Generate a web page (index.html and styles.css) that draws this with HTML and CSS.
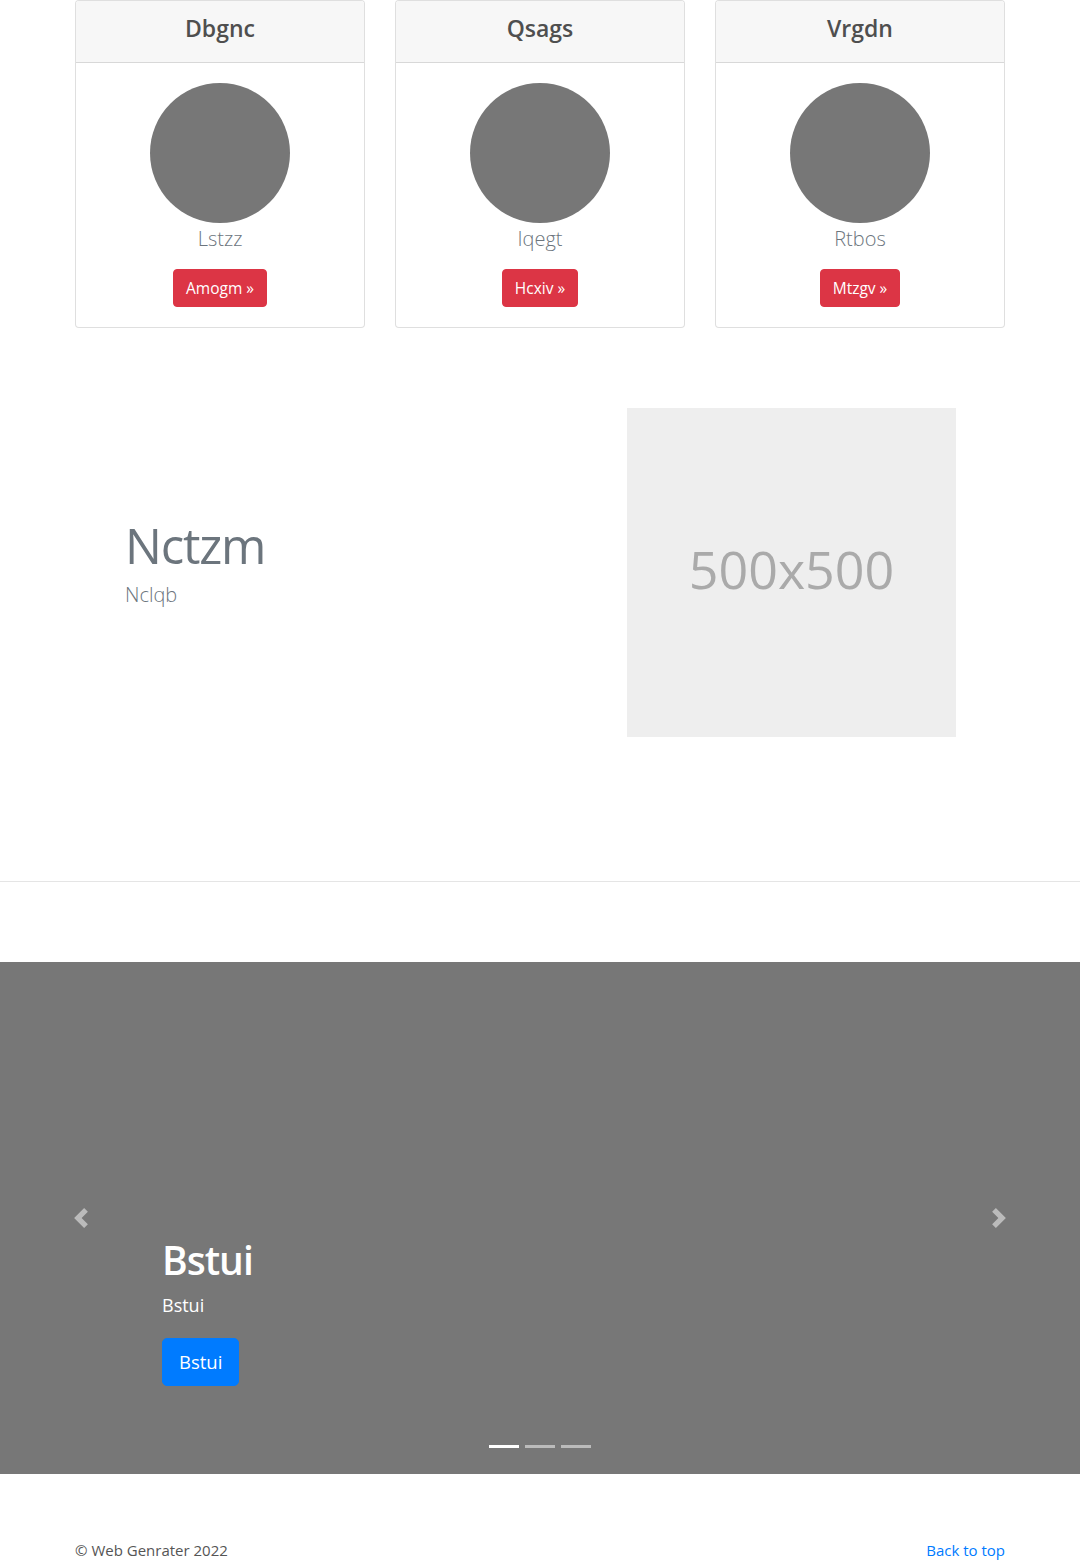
FILE: index.html
```html
<!DOCTYPE html>
<html lang="en">
<head>
<meta charset="utf-8">
<title>Web Genrater</title>
<link rel="stylesheet" href="styles.css">
</head>
<body>
<main>
  <div class="container">
    <div class="cards">
      <div class="card">
        <div class="card-header"><h4 class="card-title">Dbgnc</h4></div>
        <div class="card-body">
          <div class="avatar"></div>
          <p class="lead card-lead">Lstzz</p>
          <a href="#" class="btn btn-danger">Amogm &raquo;</a>
        </div>
      </div>
      <div class="card">
        <div class="card-header"><h4 class="card-title">Qsags</h4></div>
        <div class="card-body">
          <div class="avatar"></div>
          <p class="lead card-lead">Iqegt</p>
          <a href="#" class="btn btn-danger">Hcxiv &raquo;</a>
        </div>
      </div>
      <div class="card">
        <div class="card-header"><h4 class="card-title">Vrgdn</h4></div>
        <div class="card-body">
          <div class="avatar"></div>
          <p class="lead card-lead">Rtbos</p>
          <a href="#" class="btn btn-danger">Mtzgv &raquo;</a>
        </div>
      </div>
    </div>

    <div class="featurette">
      <div class="feat-text">
        <h2 class="featurette-heading">Nctzm</h2>
        <p class="lead feat-lead">Nclqb</p>
      </div>
      <div class="feat-img"><span>500x500</span></div>
    </div>
  </div>

  <hr class="divider">

  <div class="carousel">
    <a href="#" class="ctrl ctrl-prev" aria-label="Previous">
      <svg viewBox="0 0 8 8" width="20" height="20"><path fill="#fff" d="M5.25 0l-4 4 4 4 1.5-1.5L4.25 4l2.5-2.5L5.25 0z"/></svg>
    </a>
    <a href="#" class="ctrl ctrl-next" aria-label="Next">
      <svg viewBox="0 0 8 8" width="20" height="20"><path fill="#fff" d="M2.75 0l-1.5 1.5L3.75 4l-2.5 2.5L2.75 8l4-4-4-4z"/></svg>
    </a>
    <div class="caption">
      <h1 class="caption-title">Bstui</h1>
      <p class="caption-text">Bstui</p>
      <a href="#" class="btn btn-lg btn-primary">Bstui</a>
    </div>
    <ol class="indicators">
      <li class="active"></li>
      <li></li>
      <li></li>
    </ol>
  </div>

  <footer class="container footer">
    <p class="copy">&copy; Web Genrater 2022</p>
    <a href="#" class="top-link">Back to top</a>
  </footer>
</main>
</body>
</html>
```

FILE: styles.css
```css
* { box-sizing: border-box; }

html, body {
  margin: 0;
  padding: 0;
}

body {
  font-family: "Open Sans", "Noto Sans", sans-serif;
  font-size: 16px;
  line-height: 1.5;
  color: #212529;
  background: #fff;
}

.container {
  width: 930px;
  margin: 0 auto;
}

/* cards */
.cards {
  display: flex;
  gap: 30px;
}

.card {
  flex: 1;
  border: 1px solid rgba(0,0,0,.125);
  border-radius: 4px;
  text-align: center;
  background: #fff;
  overflow: hidden;
}

.card-header {
  background: #f7f7f7;
  border-bottom: 1px solid rgba(0,0,0,.125);
  padding: 13px 20px 11px;
}

.card-title {
  margin: 0 0 8px;
  font-size: 23px;
  line-height: 1.25;
  font-weight: 600;
  color: #4f4f4f;
}

.card-body {
  padding: 20px;
  display: flex;
  flex-direction: column;
  align-items: center;
}

.avatar {
  width: 140px;
  height: 140px;
  border-radius: 50%;
  background: #777;
}

.lead {
  font-size: 20px;
  font-weight: 300;
}

.card-lead {
  margin: 1px 0 15px;
  line-height: 30px;
  color: #6c757d;
}

.btn {
  display: inline-block;
  text-decoration: none;
  border: 1px solid transparent;
  border-radius: 4px;
  color: #fff;
}

.btn-danger {
  background: #dc3545;
  border-color: #dc3545;
  padding: 6px 12px;
  font-size: 15.5px;
  line-height: 24px;
}

/* featurette */
.featurette {
  display: flex;
  margin-top: 80px;
}

.feat-text {
  flex: 1;
  padding: 113px 0 0 50px;
}

.featurette-heading {
  margin: 0 0 10px;
  font-size: 49px;
  line-height: 1;
  font-weight: 400;
  letter-spacing: -1.2px;
  color: #6c757d;
}

.feat-lead {
  margin: 0;
  line-height: 30px;
  color: #6c757d;
}

.feat-img {
  width: 329px;
  height: 329px;
  margin-right: 49px;
  background: #eee;
  color: #aaa;
  display: flex;
  align-items: center;
  justify-content: center;
  font-size: 52px;
}

.feat-img span {
  margin-top: -6px;
}

/* divider */
.divider {
  margin: 144px 0 80px;
  border: 0;
  border-top: 1px solid rgba(0,0,0,.1);
  height: 0;
}

/* carousel */
.carousel {
  position: relative;
  height: 512px;
  background: #777;
  color: #fff;
}

.ctrl {
  position: absolute;
  top: 0;
  bottom: 0;
  width: 15%;
  display: flex;
  align-items: center;
  justify-content: center;
  opacity: .5;
}

.ctrl-prev { left: 0; }
.ctrl-next { right: 0; }

.caption {
  position: absolute;
  left: 15%;
  right: 15%;
  top: 274px;
}

.caption-title {
  margin: 0 0 9px;
  font-size: 39px;
  line-height: 48px;
  font-weight: 600;
  letter-spacing: -1px;
}

.caption-text {
  margin: 0 0 20px;
  font-size: 18px;
  line-height: 25px;
}

.btn-primary {
  background: #007bff;
  border-color: #007bff;
}

.btn-lg {
  padding: 8px 16px;
  font-size: 18.5px;
  line-height: 30px;
  border-radius: 5px;
}

.indicators {
  position: absolute;
  left: 0;
  right: 0;
  bottom: 26px;
  margin: 0;
  padding: 0;
  list-style: none;
  display: flex;
  justify-content: center;
  gap: 6px;
}

.indicators li {
  width: 30px;
  height: 3px;
  background: #fff;
  opacity: .5;
}

.indicators li.active {
  opacity: 1;
}

/* footer */
.footer {
  margin-top: 64px;
  display: flex;
  justify-content: space-between;
  font-size: 15px;
  line-height: 24px;
}

.copy {
  margin: 0;
  color: #555;
}

.top-link {
  color: #007bff;
  text-decoration: none;
}
```
